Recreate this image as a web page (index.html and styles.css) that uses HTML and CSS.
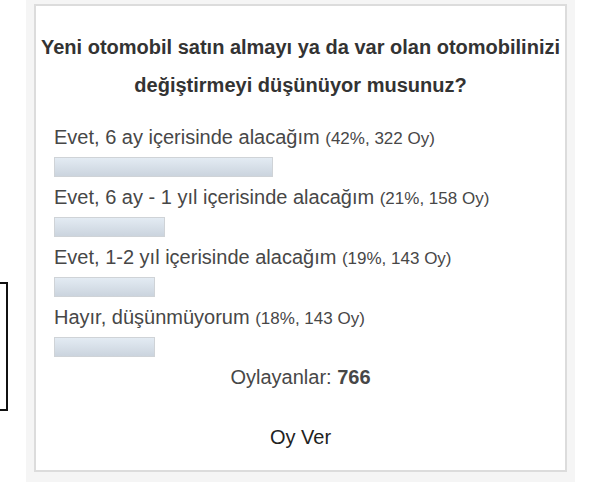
FILE: index.html
```html
<!doctype html>
<html>
    <head>
        <meta charset="utf-8">
        <title>Anket</title>
        <link rel="stylesheet" href="styles.css">
    </head>

    <body>
        <div class="sidebox"></div>
        <div class="pollwrap">
            <div class="pollcard">
                <div class="polltitle">
                    Yeni otomobil satın almayı ya da var olan otomobilinizi değiştirmeyi düşünüyor musunuz?
                </div>
                <div class="answers">
                    <div class="answer">Evet, 6 ay içerisinde alacağım <span class="votes">(42%, 322 Oy)</span></div>
                    <div class="bar" style="width: 219px;"></div>
                    <div class="answer">Evet, 6 ay - 1 yıl içerisinde alacağım <span class="votes">(21%, 158 Oy)</span></div>
                    <div class="bar" style="width: 111px;"></div>
                    <div class="answer">Evet, 1-2 yıl içerisinde alacağım <span class="votes">(19%, 143 Oy)</span></div>
                    <div class="bar" style="width: 101px;"></div>
                    <div class="answer">Hayır, düşünmüyorum <span class="votes">(18%, 143 Oy)</span></div>
                    <div class="bar" style="width: 101px;"></div>
                </div>
                <div class="voters">Oylayanlar: <b>766</b></div>
                <div class="votelink">Oy Ver</div>
            </div>
        </div>
    </body>

</html>
```

FILE: styles.css
```css
body{
    margin: 0px;
    display: flex;
    height: 482px;
    overflow: hidden;
    font-family: 'Liberation Sans', Arial, sans-serif;
    background-color: white;
}

.sidebox{
    flex: none;
    width: 6px;
    height: 125px;
    margin-top: 282px;
    border: 2px solid #111;
    border-left: none;
}

.pollwrap{
    flex: none;
    margin-left: 18px;
    width: 533px;
    padding: 4px 8px 10px 8px;
    background-color: #f5f5f5;
}

.pollcard{
    box-sizing: border-box;
    height: 468px;
    background-color: white;
    border: 2px solid #dcdcdc;
    padding-top: 22px;
}

.polltitle{
    font-size: 20px;
    font-weight: bold;
    color: #333;
    text-align: center;
    line-height: 38px;
}

.answers{
    margin-top: 13px;
    padding-left: 18px;
}

.answer{
    font-size: 20px;
    color: #474747;
    line-height: 40px;
    height: 40px;
}

.votes{
    font-size: 17px;
    line-height: 20px;
}

.bar{
    box-sizing: border-box;
    height: 20px;
    border: 1px solid #cfd3d7;
    background: linear-gradient(#e3ebf3, #cbd4de);
}

.voters{
    font-size: 20px;
    color: #474747;
    text-align: center;
    line-height: 40px;
}

.votelink{
    margin-top: 20px;
    font-size: 20px;
    color: #222;
    text-align: center;
    line-height: 40px;
}
```
